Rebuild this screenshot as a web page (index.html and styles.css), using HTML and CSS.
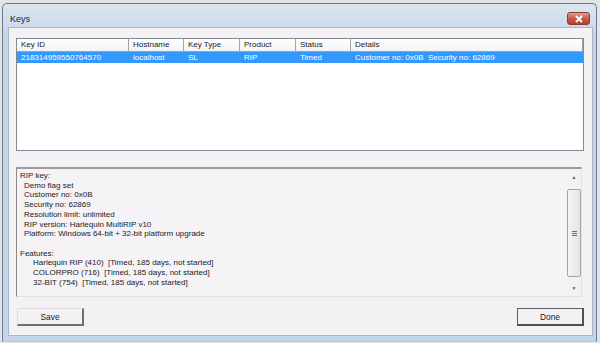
FILE: index.html
```html
<!DOCTYPE html>
<html>
<head>
    <title>Keys</title>
    <link rel="stylesheet" href="styles.css">
</head>
<body>
    <div class="window">
        <div class="title-bar">
            <span class="title">Keys</span>
            <span class="close-button">
                <svg width="10" height="8" viewBox="0 0 10 8">
                    <path d="M2 1 L8 7 M8 1 L2 7" stroke="#fff" stroke-width="2"/>
                </svg>
            </span>
        </div>

        <div class="client">
            <div class="key-list">
                <div class="list-row list-header">
                    <div class="cell">Key ID</div>
                    <div class="cell">Hostname</div>
                    <div class="cell">Key Type</div>
                    <div class="cell">Product</div>
                    <div class="cell">Status</div>
                    <div class="cell">Details</div>
                </div>
                <div class="list-row selected">
                    <div class="cell">218314959550764570</div>
                    <div class="cell">localhost</div>
                    <div class="cell">SL</div>
                    <div class="cell">RIP</div>
                    <div class="cell">Timed</div>
                    <div class="cell">Customer no: 0x0B&nbsp; Security no: 62869</div>
                </div>
            </div>

            <div class="details-panel">
                <div class="details-text">
                    <div>RIP key:</div>
                    <div class="indent">Demo flag set</div>
                    <div class="indent">Customer no: 0x0B</div>
                    <div class="indent">Security no: 62869</div>
                    <div class="indent">Resolution limit: unlimited</div>
                    <div class="indent">RIP version: Harlequin MultiRIP v10</div>
                    <div class="indent">Platform: Windows 64-bit + 32-bit platform upgrade</div>
                    <div>&nbsp;</div>
                    <div>Features:</div>
                    <div class="indent2">Harlequin RIP (410)&nbsp; [Timed, 185 days, not started]</div>
                    <div class="indent2">COLORPRO (716)&nbsp; [Timed, 185 days, not started]</div>
                    <div class="indent2">32-BIT (754)&nbsp; [Timed, 185 days, not started]</div>
                </div>
                <div class="scrollbar">
                    <div class="arrow">&#9650;</div>
                    <div class="track">
                        <div class="thumb"><span class="grip"></span></div>
                    </div>
                    <div class="arrow">&#9660;</div>
                </div>
            </div>

            <div class="button-row">
                <button class="dlg-button">Save</button>
                <button class="dlg-button default">Done</button>
            </div>
        </div>
    </div>
</body>
</html>
```

FILE: styles.css
```css
body {
    margin: 0;
    width: 600px;
    height: 343px;
    overflow: hidden;
    background-color: #e4e4e4;
    font-family: "Liberation Sans", Arial, sans-serif;
    font-size: 8px;
    color: #1a1a1a;
}
.window {
    margin: 3px 3px 0 2px;
    height: 337px;
    display: flex;
    flex-direction: column;
    border: 1px solid #6b7a8c;
    border-bottom: 1px solid #9ed6ea;
    border-radius: 5px 5px 0 0;
    background: linear-gradient(#dce6f1, #c6d6e8 30px, #c3d5e9);
}
.title-bar {
    height: 23px;
    display: flex;
    justify-content: space-between;
    align-items: flex-start;
    padding: 0 6px 0 7px;
}
.title {
    padding-top: 10px;
    font-size: 9px;
    color: #1e1e1e;
}
.close-button {
    margin-top: 8px;
    width: 21px;
    height: 11px;
    display: flex;
    align-items: center;
    justify-content: center;
    border: 1px solid #8e3a2f;
    border-radius: 3px;
    background: linear-gradient(#dca08f, #c85b45 50%, #b8402c);
}
.client {
    flex: 1;
    margin: 0 3px 5px 5px;
    padding: 10px 8px 9px 7px;
    display: flex;
    flex-direction: column;
    background-color: #f4f1f4;
    border: 1px solid #a9b6c4;
}
.key-list {
    height: 111px;
    background-color: #fff;
    border: 1px solid #838a93;
}
.list-row {
    display: grid;
    grid-template-columns: 112px 55px 56px 56px 55px 1fr;
    height: 12px;
    line-height: 12px;
}
.list-header {
    height: 12px;
    border-bottom: 1px solid #a0a0a0;
    background: linear-gradient(#ffffff, #f3f3f3);
}
.list-header .cell {
    border-right: 1px solid #a3a3a3;
}
.cell {
    padding-left: 4px;
    white-space: nowrap;
    overflow: hidden;
}
.selected {
    background-color: #3399ff;
    color: #fff;
    height: 11px;
    line-height: 11px;
}
.details-panel {
    margin-top: 16px;
    margin-right: 2px;
    height: 127px;
    display: flex;
    border-top: 2px solid #9c9c9c;
    border-left: 1px solid #8a8a8a;
    border-right: 1px solid #e2e2e2;
    border-bottom: 1px solid #e2e2e2;
    background-color: #f6f3f7;
}
.details-text {
    flex: 1;
    padding: 2px 0 0 3px;
    line-height: 9.7px;
}
.indent {
    padding-left: 4px;
}
.indent2 {
    padding-left: 13px;
}
.scrollbar {
    width: 14px;
    display: flex;
    flex-direction: column;
    background-color: #f3f1f3;
}
.arrow {
    height: 16px;
    font-size: 5px;
    color: #606060;
    text-align: center;
    line-height: 16px;
}
.track {
    flex: 1;
    padding: 4px 0 5px;
}
.thumb {
    height: 100%;
    display: flex;
    align-items: center;
    justify-content: center;
    border: 1px solid #a4a4a4;
    border-radius: 2px;
    background: linear-gradient(90deg, #f4f4f4, #e4e4e4);
}
.grip {
    width: 5px;
    height: 5px;
    background: repeating-linear-gradient(#6d6d6d 0 1px, transparent 1px 2px);
}
.button-row {
    margin-top: 11px;
    display: flex;
    justify-content: space-between;
    padding-left: 1px;
}
.dlg-button {
    width: 67px;
    height: 18px;
    padding: 0;
    font-family: "Liberation Sans", Arial, sans-serif;
    font-size: 8.4px;
    color: #1a1a1a;
    background-color: #f4f1f4;
    border: 1px solid #dcdcdc;
    border-right: 2px solid #707070;
    border-bottom: 2px solid #707070;
}
.default {
    border: 1px solid #606060;
    border-right: 2px solid #505050;
    border-bottom: 2px solid #505050;
}
```
